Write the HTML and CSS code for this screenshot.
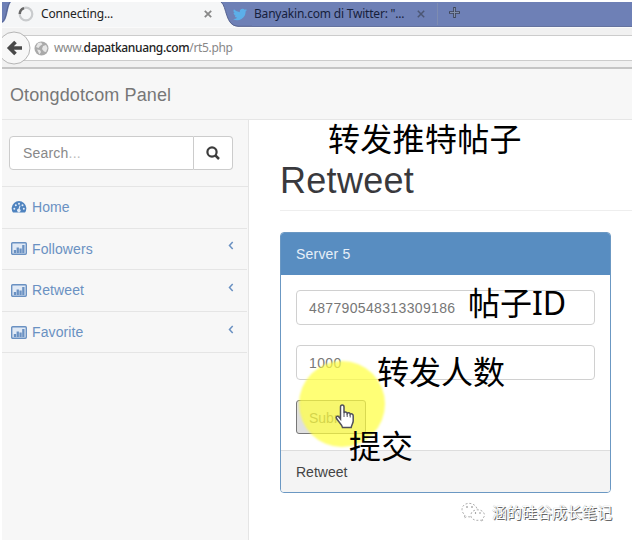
FILE: index.html
```html
<!DOCTYPE html>
<html lang="en">
<head>
<meta charset="utf-8">
<title>Otongdotcom Panel</title>
<link rel="stylesheet" href="styles.css">
</head>
<body>
<svg width="0" height="0" class="defs">
  <symbol id="chart" viewBox="0 0 16 13"><rect x=".7" y=".7" width="14.6" height="11.6" rx="1" fill="#e0e9f5" stroke="currentColor" stroke-width="1.4"/><path d="M2.800 8h2.300v3H2.800zM5.600 5.500h2.300V11H5.600zM8.400 6.500h2.300V11H8.400zM11.200 3h2.300v8h-2.300z" fill="currentColor"/></symbol>
  <symbol id="angle" viewBox="0 0 6 9"><path d="M4.700 1L1.500 4.500l3.200 3.500" fill="none" stroke="currentColor" stroke-width="1.500"/></symbol>
</svg>
<div class="window">
  <div class="tabs">
    <svg class="tab-shape" width="250" height="25" viewBox="0 0 250 25"><path d="M0 25V21C6 19 5 5 9 0H219C225 4 223 24 236 24.500H250V25z" fill="#f5f6f7"/><path d="M0 20C5 17 4 5 8 0M219 0C225 4 223 24 236 24.300H250" fill="none" stroke="#586592"/></svg>
    <div class="tab active">
      <svg class="spinner" width="16" height="16" viewBox="0 0 16 16"><circle cx="8" cy="8" r="6.300" fill="none" stroke="#c9cbcd" stroke-width="2.200"/><path d="M1.800 8A6.200 6.200 0 0 1 6 2.100" fill="none" stroke="#666" stroke-width="2.500"/></svg>
      <span class="tab-title">Connecting...</span>
      <svg class="close" width="8" height="8" viewBox="0 0 8 8"><path d="M.8.8l6.400 6.400M7.200.8L.8 7.200" stroke="#888" stroke-width="1.800"/></svg>
    </div>
    <div class="tab second">
      <svg width="14" height="13" viewBox="0 0 24 20"><path d="M24 2.400a10 10 0 0 1-2.800.8A5 5 0 0 0 23.300.5a10 10 0 0 1-3.100 1.200 4.900 4.900 0 0 0-8.400 4.500A14 14 0 0 1 1.700 1a4.900 4.900 0 0 0 1.500 6.600 5 5 0 0 1-2.200-.6c0 2.400 1.600 4.400 3.900 4.900a5 5 0 0 1-2.200.1 4.900 4.900 0 0 0 4.600 3.400A10 10 0 0 1 0 17.500 14 14 0 0 0 21.500 5 10 10 0 0 0 24 2.400z" fill="#5cafe9"/></svg>
      <span class="tab-title">Banyakin.com di Twitter: "...</span>
      <svg class="close" width="8" height="8" viewBox="0 0 8 8"><path d="M.8.8l6.400 6.400M7.200.8L.8 7.200" stroke="#4c5674" stroke-width="1.500"/></svg>
    </div>
    <svg class="plus" width="11" height="11" viewBox="0 0 11 11"><path d="M5.500 0v11M0 5.500h11" stroke="#3f4658" stroke-width="2.600"/><path d="M5.500 1v9M1 5.500h9" stroke="#8290ab"/></svg>
  </div>
  <div class="toolbar">
    <div class="address">
      <svg width="15" height="15" viewBox="0 0 15 15"><circle cx="7.500" cy="7.500" r="7" fill="#aaa"/><path d="M4 2l3-.5 1.500 1.700L6 5 4.500 7 2 6zM3 8.500l3 .5 1 2-1.500 2.500zM9 5l3-1 1.500 3-1.500 4-2-.5L8 8z" fill="#e6e6e6"/></svg>
      <span class="url">www.<b>dapatkanuang.com</b>/rt5.php</span>
    </div>
    <svg class="back" width="30" height="34" viewBox="0 0 30 34"><circle cx="12" cy="17" r="16" fill="#f7f7f7" stroke="#b5b5b5"/><path d="M13.500 11L7.500 17l6 6M8 17h12" fill="none" stroke="#494949" stroke-width="3.700"/></svg>
  </div>
  <header class="navbar">Otongdotcom Panel</header>
  <div class="content">
    <aside class="sidebar">
      <div class="search">
        <div class="search-field">Search<span>...</span></div>
        <div class="search-button"><svg width="14" height="14" viewBox="0 0 14 14"><circle cx="6" cy="6" r="4.600" fill="none" stroke="#3c3c3c" stroke-width="2.200"/><path d="M9.500 9.500L13 13" stroke="#3c3c3c" stroke-width="2.500"/></svg></div>
      </div>
      <nav>
        <a class="item"><svg width="16" height="12" viewBox="0 0 16 12"><path d="M2 11.500A7.300 7.300 0 1 1 14 11.500z" fill="#4f83bf"/><g fill="#e4edf8"><circle cx="3.300" cy="7.800" r="1"/><circle cx="4.800" cy="4.300" r="1"/><circle cx="8" cy="2.800" r="1"/><circle cx="11.500" cy="4.300" r="1"/><circle cx="12.800" cy="7.800" r="1"/><path d="M8.500 4.500l1 .2-.8 3.300a1.700 1.700 0 1 1-1.200-.2z"/></g></svg><span>Home</span></a>
        <a class="item"><svg width="16" height="13"><use href="#chart"/></svg><span>Followers</span><svg class="arrow" width="6" height="9"><use href="#angle"/></svg></a>
        <a class="item"><svg width="16" height="13"><use href="#chart"/></svg><span>Retweet</span><svg class="arrow" width="6" height="9"><use href="#angle"/></svg></a>
        <a class="item"><svg width="16" height="13"><use href="#chart"/></svg><span>Favorite</span><svg class="arrow" width="6" height="9"><use href="#angle"/></svg></a>
      </nav>
    </aside>
    <main>
      <h1>Retweet</h1>
      <section class="panel">
        <div class="panel-heading">Server 5</div>
        <div class="panel-body">
          <div class="field">487790548313309186</div>
          <div class="field">1000</div>
          <div class="submit">Submit</div>
        </div>
        <div class="panel-footer">Retweet</div>
      </section>
    </main>
  </div>
</div>
<div class="highlight"></div>
<svg class="pointer" width="20" height="25" viewBox="0 0 20 25"><path d="M5.500 15V3c0-2.600 3.500-2.600 3.500 0v6c.5-1.400 3-1.200 3.200.5.800-1.200 2.900-.8 3 .8 1-.9 3-.4 3 1.500V17c0 2-1.500 3.500-2 6.500H7.500C7 20.500 4 18.500 1.500 14.500c-1-2 1-3.200 2.500-1.500z" fill="#fff" stroke="#50505a" stroke-width="1.500"/><path d="M9 9v4M12.200 9.500V13M15.200 10.500V13.500" stroke="#50505a"/></svg>
<div class="note note-title">转发推特帖子</div>
<div class="note note-id">帖子ID</div>
<div class="note note-count">转发人数</div>
<div class="note note-submit">提交</div>
<div class="watermark">
  <svg width="25" height="20" viewBox="0 0 25 20"><g fill="#fff" stroke="#999" stroke-width=".8" stroke-dasharray="2 1.800"><path d="M4 13l-1 3 3-1.500c8 2 12-3 10-8C13-1 1 0 1 7.500 1 10 2.500 12 4 13z"/><path d="M21 17l1 2.500-3-1.500c-6 1.500-10-2-9-6 1.500-6 13-5.500 13.500 1 0 1.500-1 3-2.500 4z"/></g><g fill="#777"><circle cx="6" cy="5" r=".8"/><circle cx="11" cy="5" r=".8"/><circle cx="14.500" cy="11" r=".7"/><circle cx="19" cy="11" r=".7"/></g></svg>
  <span>涵的硅谷成长笔记</span>
</div>
</body>
</html>
```
FILE: styles.css
```css
* { box-sizing: border-box; }
body { margin: 0; width: 632px; height: 540px; overflow: hidden; background: #fff; font: 14px/20px "Liberation Sans", sans-serif; color: #444; position: relative; }
svg { flex: none; display: block; }
.defs { position: absolute; }
.window { padding: 2px 0 0 2px; height: 540px; display: flex; flex-direction: column; }
.tabs { height: 25px; flex: none; background: #6e80b6; border-bottom: 1px solid #65739f; display: flex; align-items: center; position: relative; font: 12px/20px "Noto Sans", sans-serif; color: #222; }
.tab-shape { position: absolute; left: 0; top: 0; }
.tab { display: flex; align-items: center; position: relative; height: 22px; white-space: nowrap; }
.active { width: 231px; padding-left: 16px; gap: 7px; }
.active .close { margin-left: auto; margin-right: 21px; }
.active .tab-title { letter-spacing: -.15px; }
.second { width: 205px; gap: 7px; border-right: 1px solid #7e8cb1; }
.second .tab-title { width: 151px; letter-spacing: -.2px; color: #16203c; }
.second .close { margin-left: 5px; }
.plus { margin-left: 11px; margin-top: -3px; }
.toolbar { height: 42px; flex: none; background: #f1f1f1; border-top: 1px solid #fafafa; border-bottom: 2px solid #c5c5c5; padding-top: 7px; position: relative; }
.address { height: 26px; background: #fff; border: 1px solid #ccc; border-width: 1px 0; margin-left: 20px; padding-left: 12px; display: flex; align-items: center; gap: 5px; }
.url { font: 12px/20px "Noto Sans", sans-serif; color: #888; letter-spacing: -.36px; }
.url b { font-weight: 500; color: #222; }
.back { position: absolute; left: 0; top: 3px; }
.navbar { height: 51px; flex: none; background: #f7f7f7; border-bottom: 1px solid #e6e6e6; padding: 16px 8px; font-size: 18px; line-height: 20px; color: #777; letter-spacing: .12px; }
.content { flex: 1; display: flex; min-height: 0; }
.sidebar { width: 247px; flex: none; background: #f7f7f7; border-right: 1px solid #e5e5e5; }
.search { height: 67px; padding: 16px 15px 16px 7px; display: flex; border-bottom: 1px solid #e5e5e5; }
.search-field { width: 185px; border: 1px solid #ccc; border-radius: 4px 0 0 4px; background: #fff; padding: 6px 13px; color: #888; letter-spacing: .2px; }
.search-field span { color: #bbb; }
.search-button { width: 39px; border: 1px solid #ccc; border-left: 0; border-radius: 0 4px 4px 0; background: #fff; display: flex; align-items: center; justify-content: center; }
.item { height: 41.6px; border-bottom: 1px solid #e5e5e5; padding-left: 9px; display: flex; align-items: center; gap: 5px; color: #6a91c2; margin-right: 1px; }
.item span { letter-spacing: .1px; }
.arrow { margin: 0 13px 6px auto; }
main { flex: 1; padding: 39px 0 0 31px; }
h1 { margin: 0 0 21px; height: 52px; border-bottom: 1px solid #eee; font-size: 36px; line-height: 44px; font-weight: 400; color: #39393d; letter-spacing: .3px; }
.panel { width: 331px; height: 261px; border: 1px solid #6b98c3; border-radius: 4px; overflow: hidden; display: flex; flex-direction: column; }
.panel-heading { height: 42px; background: #588dc1; color: #e6eff8; padding: 11px 15px; letter-spacing: .2px; }
.panel-body { flex: 1; padding: 15px; }
.field { height: 35px; border: 1px solid #d0d0d0; border-radius: 4px; padding: 8px 12px; margin-bottom: 20px; color: #777; line-height: 19px; letter-spacing: .35px; }
.submit { width: 70px; height: 34px; border: 1px solid #777; border-radius: 3px; background: #e0e0e0; padding: 7px 12px; color: #666; }
.panel-footer { height: 42px; border-top: 1px solid #ddd; background: #f4f4f4; padding: 11px 15px; }
.highlight { position: absolute; left: 299px; top: 361px; width: 86px; height: 86px; border-radius: 50%; background: rgba(255, 255, 65, .72); filter: blur(1px); }
.pointer { position: absolute; left: 335px; top: 404px; }
.note { position: absolute; font: 32px/40px "Noto Sans", "Noto Sans CJK SC", sans-serif; color: #000; white-space: nowrap; }
.note-title { left: 328px; top: 119px; letter-spacing: .3px; }
.note-id { left: 468px; top: 283px; }
.note-count { left: 377px; top: 352px; }
.note-submit { left: 349px; top: 426px; }
.watermark { position: absolute; left: 461px; top: 501px; display: flex; align-items: center; gap: 6px; font: 15px/22px "Noto Sans CJK SC", sans-serif; color: #fff; text-shadow: 1px 1px 0 #666, 0 0 1px #999; white-space: nowrap; }
```
